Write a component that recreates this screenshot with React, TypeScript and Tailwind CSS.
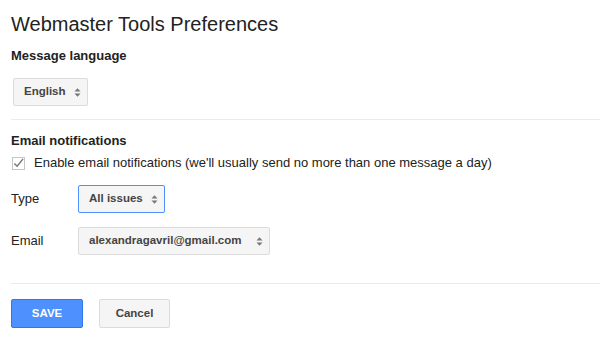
import React, { useState } from 'react';

const Arrows: React.FC = () => (
  <svg width="7" height="9" viewBox="0 0 7 9" className="shrink-0">
    <path d="M0.5 3.6 L3.5 0.3 L6.5 3.6 Z" fill="#777" />
    <path d="M0.5 5.4 L3.5 8.7 L6.5 5.4 Z" fill="#777" />
  </svg>
);

const Select: React.FC<{ label: string; width: string; focused?: boolean }> = ({ label, width, focused }) => (
  <div
    className={`flex h-[28px] items-center justify-between rounded-[2px] border bg-[#f5f5f5] pl-[10px] pr-[6px] text-[11.5px] font-bold text-[#444] ${width} ${
      focused ? 'border-[#4d90fe]' : 'border-[#dcdcdc]'
    }`}
  >
    <span>{label}</span>
    <Arrows />
  </div>
);

const App: React.FC = () => {
  const [enabled, setEnabled] = useState(true);

  return (
    <div className="h-[340px] w-[600px] overflow-hidden bg-white pl-[11px] font-['Liberation_Sans',Arial,sans-serif] text-[#222]">
      <h1 className="pt-[11px] text-[20px] leading-[26px] font-normal">Webmaster Tools Preferences</h1>
      <h2 className="mt-[11px] text-[13px] leading-[16px] font-bold">Message language</h2>
      <div className="mt-[14px] pl-[2px]">
        <Select label="English" width="w-[75px]" />
      </div>

      <div className="mt-[13px] h-px bg-[#ebebeb]" />

      {/* Email notifications */}
      <h2 className="mt-[13px] text-[13px] leading-[16px] font-bold">Email notifications</h2>
      <label className="mt-[6px] flex items-center text-[13px] leading-[16px] text-[#222]">
        <span
          onClick={() => setEnabled(!enabled)}
          className="ml-[1px] mr-[9px] flex h-[13px] w-[13px] items-center justify-center border border-[#c6c6c6] bg-white"
        >
          {enabled && (
            <svg width="12" height="12" viewBox="0 0 12 12">
              <path d="M1.5 6.5 L4.5 9.5 L11 1.5" stroke="#777" strokeWidth="1.6" fill="none" />
            </svg>
          )}
        </span>
        Enable email notifications (we'll usually send no more than one message a day)
      </label>

      <div className="mt-[14px] grid grid-cols-[67px_auto] items-center gap-y-[14px]">
        <span className="text-[13px]">Type</span>
        <Select label="All issues" width="w-[87px]" focused />
        <span className="text-[13px]">Email</span>
        <Select label="alexandragavril@gmail.com" width="w-[192px]" />
      </div>

      <div className="mt-[28px] h-px bg-[#ebebeb]" />

      <div className="mt-[15px] flex gap-[16px]">
        <button className="h-[29px] w-[72px] rounded-[2px] border border-[#3079ed] bg-[#4d90fe] text-[11.5px] font-bold text-white">
          SAVE
        </button>
        <button className="h-[29px] w-[71px] rounded-[2px] border border-[#dcdcdc] bg-[#f5f5f5] text-[11.5px] font-bold text-[#444]">
          Cancel
        </button>
      </div>
    </div>
  );
};

export default App;
